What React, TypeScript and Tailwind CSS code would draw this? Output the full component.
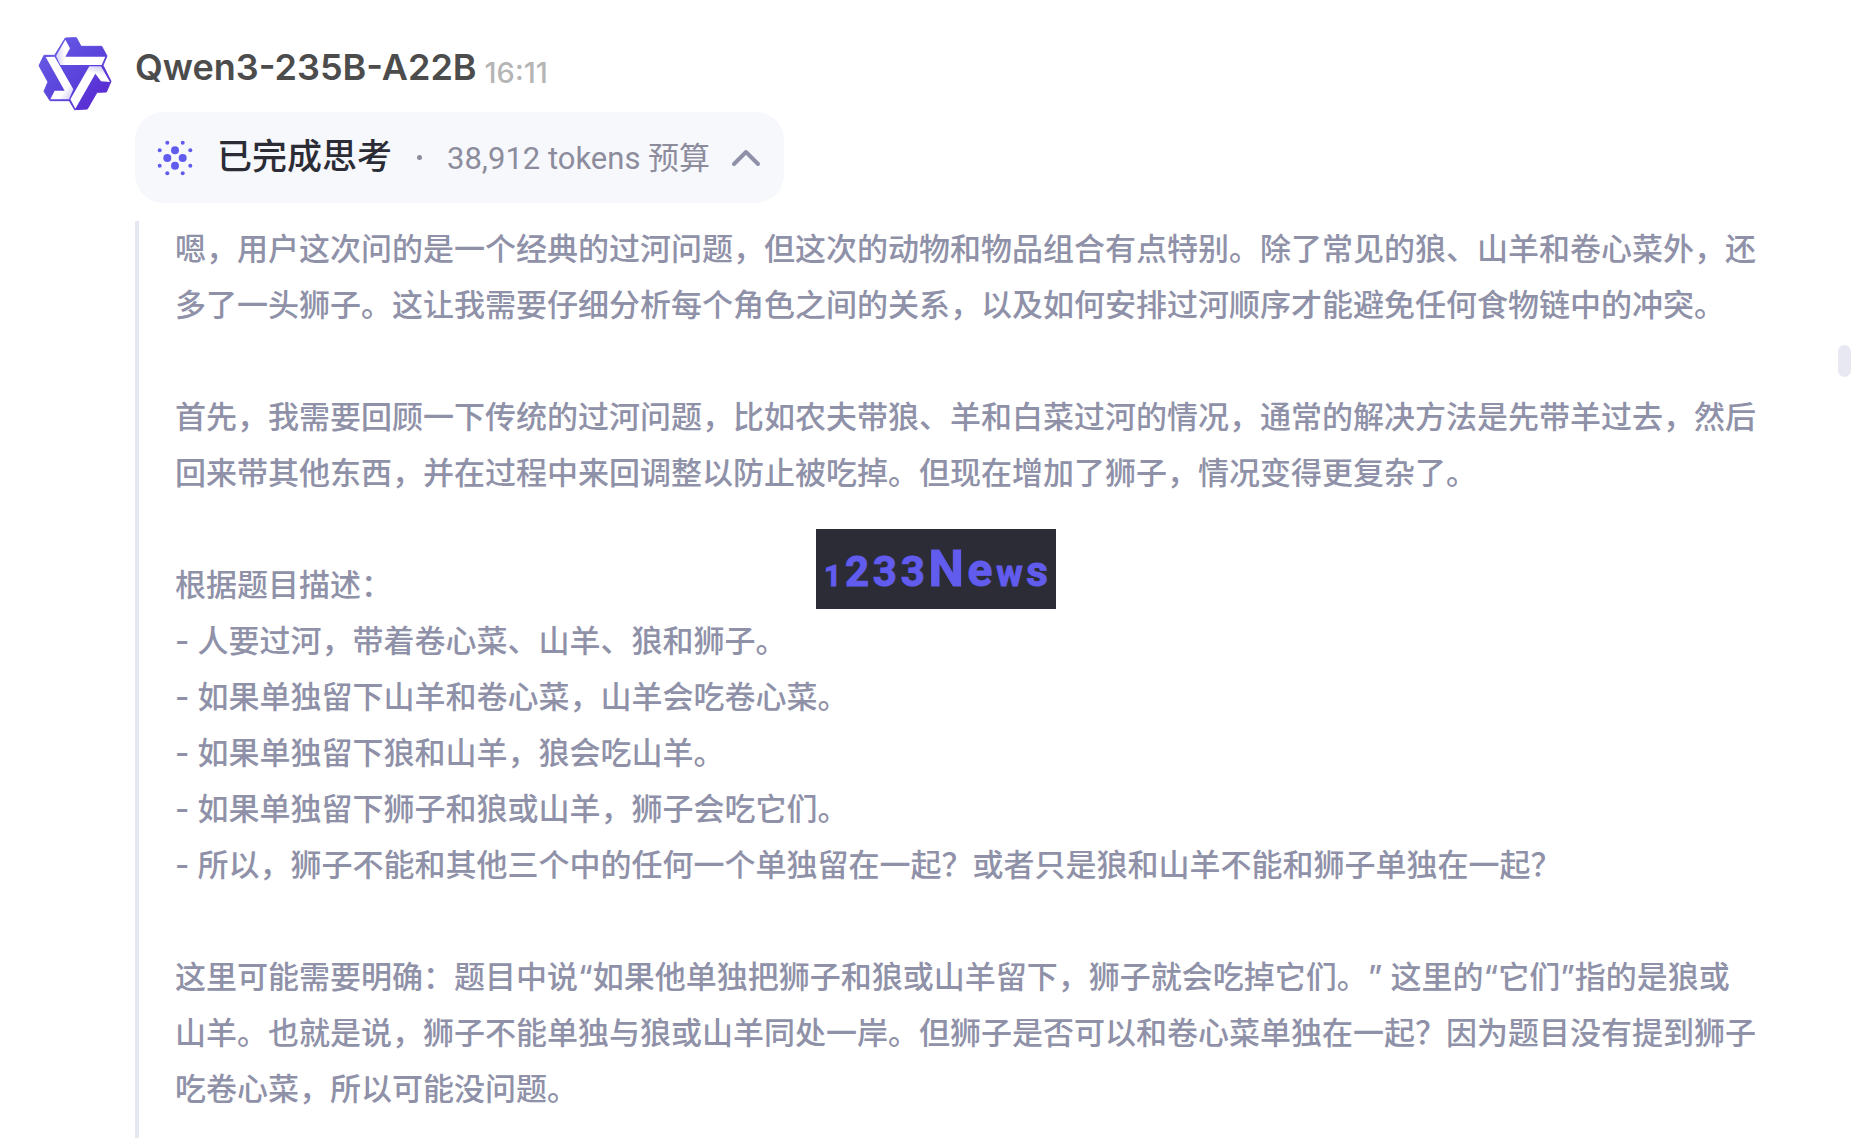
// components/chat/ThinkingMessage.tsx
interface MessageHeaderProps {
  model: string
  time: string
}

const PARAGRAPHS = [
  '嗯，用户这次问的是一个经典的过河问题，但这次的动物和物品组合有点特别。除了常见的狼、山羊和卷心菜外，还多了一头狮子。这让我需要仔细分析每个角色之间的关系，以及如何安排过河顺序才能避免任何食物链中的冲突。',
  '首先，我需要回顾一下传统的过河问题，比如农夫带狼、羊和白菜过河的情况，通常的解决方法是先带羊过去，然后回来带其他东西，并在过程中来回调整以防止被吃掉。但现在增加了狮子，情况变得更复杂了。',
  `根据题目描述：
- 人要过河，带着卷心菜、山羊、狼和狮子。
- 如果单独留下山羊和卷心菜，山羊会吃卷心菜。
- 如果单独留下狼和山羊，狼会吃山羊。
- 如果单独留下狮子和狼或山羊，狮子会吃它们。
- 所以，狮子不能和其他三个中的任何一个单独留在一起？或者只是狼和山羊不能和狮子单独在一起？`,
  `这里可能需要明确：题目中说“如果他单独把狮子和狼或山羊留下，狮子就会吃掉它们。” 这里的“它们”指的是狼或
山羊。也就是说，狮子不能单独与狼或山羊同处一岸。但狮子是否可以和卷心菜单独在一起？因为题目没有提到狮子吃卷心菜，所以可能没问题。`,
]

const QwenLogo = () => (
  <svg viewBox="54 52 222 222" className="size-[74px] shrink-0" aria-hidden="true">
    <defs>
      <linearGradient id="body" x1="0" y1="0" x2="1" y2="1">
        <stop offset="0" stopColor="#6a5fe6" />
        <stop offset="0.5" stopColor="#5b45dc" />
        <stop offset="1" stopColor="#5a22cf" />
      </linearGradient>
      <linearGradient id="armTop" gradientUnits="userSpaceOnUse" x1="106" y1="124" x2="136" y2="122">
        <stop offset="0" stopColor="#cfcaf7" />
        <stop offset="1" stopColor="#fff" />
      </linearGradient>
      <linearGradient id="armLeft" gradientUnits="userSpaceOnUse" x1="162" y1="228" x2="136" y2="208">
        <stop offset="0" stopColor="#cfcaf7" />
        <stop offset="1" stopColor="#fff" />
      </linearGradient>
      <linearGradient id="armRight" gradientUnits="userSpaceOnUse" x1="228" y1="136" x2="222" y2="162">
        <stop offset="0" stopColor="#cfcaf7" />
        <stop offset="1" stopColor="#fff" />
      </linearGradient>
    </defs>
    <path
      d="M136 55L169 54L183 80L245 80L261 109L249 137L273 185L259 217L231 218L202 268L164 270L148 243L90 243L72 215L84 187L57 138L72 107L104 107Z"
      fill="url(#body)"
      stroke="url(#body)"
      strokeWidth="3"
      strokeLinejoin="round"
    />
    <path d="M136 60L150 86L136 111L256 111L245 136L121 136L108 109Z" fill="url(#armTop)" />
    <path d="M77 112L104 111L160 209L147 239L91 239L104 213L134 213Z" fill="url(#armLeft)" />
    <path d="M208 140L243 140L270 187L243 185L226 162L166 267L151 239Z" fill="url(#armRight)" />
  </svg>
)

const ThinkingIcon = () => (
  <svg viewBox="-18 -18 36 36" className="size-9" fill="#615ced" aria-hidden="true">
    <circle cx="0" cy="-7.7" r="4" />
    <circle cx="7.7" cy="0" r="4" />
    <circle cx="0" cy="7.7" r="4" />
    <circle cx="-7.7" cy="0" r="4" />
    <circle cx="-7.7" cy="-15.3" r="2" />
    <circle cx="7.7" cy="-15.3" r="2" />
    <circle cx="15.3" cy="-7.7" r="2" />
    <circle cx="15.3" cy="7.7" r="2" />
    <circle cx="7.7" cy="15.3" r="2" />
    <circle cx="-7.7" cy="15.3" r="2" />
    <circle cx="-15.3" cy="7.7" r="2" />
    <circle cx="-15.3" cy="-7.7" r="2" />
  </svg>
)

const MessageHeader = ({ model, time }: MessageHeaderProps) => (
  <header className="flex items-end gap-2">
    <h1 className="text-[36px] leading-[44px] font-semibold text-[#4c4c4c]">{model}</h1>
    <time className="text-[29px] leading-8 font-medium text-[#b5b5b5]">{time}</time>
  </header>
)

const ThinkingToggle = () => (
  <button
    type="button"
    aria-expanded="true"
    className="flex h-[91px] items-center rounded-[28px] bg-[#f7f8fc] px-[22px]"
  >
    <ThinkingIcon />
    <span className="ml-6 flex items-baseline">
      <span className="text-[35px] leading-[44px] font-medium text-[#2c2c36]">已完成思考</span>
      <span className="mx-[25px] size-[5px] self-center rounded-full bg-[#8c8c9c]" />
      <span className="font-['Roboto','Noto_Sans_CJK_SC',sans-serif] text-[31px] leading-[44px] text-[#8c8c9c]">
        38,912 tokens 预算
      </span>
    </span>
    <svg viewBox="0 0 32 32" className="ml-5 size-8" fill="none" aria-hidden="true">
      <path d="M4 22L16 10L28 22" stroke="#8f91a8" strokeWidth="4" strokeLinecap="round" strokeLinejoin="round" />
    </svg>
  </button>
)

const NewsBadge = () => (
  <div className="absolute top-[529px] left-1/2 flex h-20 w-60 -translate-x-1/2 items-baseline justify-between bg-[#2c2c36] px-2 font-['Roboto',sans-serif] font-bold leading-[80px] text-[#615ced] [-webkit-text-stroke:1px_#615ced]">
    <span className="text-[30px]">1</span>
    <span className="text-[42px]">2</span>
    <span className="text-[42px]">3</span>
    <span className="text-[42px]">3</span>
    <span className="text-[50px]">N</span>
    <span className="text-[46px]">e</span>
    <span className="text-[36px]">w</span>
    <span className="text-[42px]">s</span>
  </div>
)

export default function App() {
  return (
    <main className="relative flex min-h-screen gap-[23px] bg-white pr-[72px] pl-[38px] font-['Inter','Noto_Sans_CJK_SC',sans-serif]">
      <div className="pt-[37px]">
        <QwenLogo />
      </div>

      <article className="flex min-w-0 flex-1 flex-col pt-[45px]">
        <MessageHeader model="Qwen3-235B-A22B" time="16:11" />
        <div className="mt-[23px] mb-[18px] flex">
          <ThinkingToggle />
        </div>
        <div className="flex flex-1 flex-col gap-14 border-l-4 border-[#e6e8f0] pr-5 pb-5 pl-9 text-[31px] leading-[56px] font-medium text-[#8f91a8] [text-spacing-trim:space-all]">
          {PARAGRAPHS.map((text) => (
            <p key={text}>
              {text.split('\n').map((line) => (
                <span key={line} className="block w-fit">
                  {line}
                </span>
              ))}
            </p>
          ))}
        </div>
      </article>

      <NewsBadge />
      <div className="absolute top-[345px] right-[21px] h-8 w-[13px] rounded-full bg-[#e8e8f2]" />
    </main>
  )
}
